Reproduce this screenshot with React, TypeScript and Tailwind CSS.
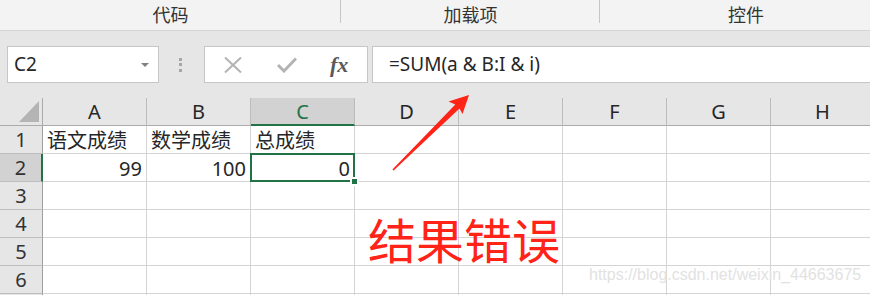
import React from "react";

const COLS = ["A", "B", "C", "D", "E", "F", "G", "H"];
const ROWS = [1, 2, 3, 4, 5, 6, 7];

const DATA: Record<string, { v: string; num?: boolean }> = {
  A1: { v: "语文成绩" },
  B1: { v: "数学成绩" },
  C1: { v: "总成绩" },
  A2: { v: "99", num: true },
  B2: { v: "100", num: true },
  C2: { v: "0", num: true },
};

export default function App() {
  return (
    <div className="relative w-[870px] h-[295px] overflow-hidden bg-white text-[#262626] font-['Noto_Sans','Noto_Sans_CJK_SC',sans-serif]">
      {/* ribbon group labels */}
      <div className="flex h-[31px] bg-[#f3f3f3] border-b border-[#d5d5d5] text-[18px] leading-[31px] text-[#333]">
        <div className="relative w-[341px] shrink-0 text-center">
          代码
          <span className="absolute right-0 top-0 h-[23px] w-px bg-[#c6c6c6]" />
        </div>
        <div className="relative w-[259px] shrink-0 text-center">
          加载项
          <span className="absolute right-0 top-0 h-[23px] w-px bg-[#c6c6c6]" />
        </div>
        <div className="w-[292px] shrink-0 text-center">控件</div>
      </div>

      {/* formula bar */}
      <div className="flex items-center h-[67px] bg-[#e6e6e6] pl-[7px]">
        <div className="flex items-center justify-between w-[152px] h-[37px] bg-white border border-[#c6c6c6] pl-[6px] pr-[9px] text-[19px]">
          <span>C2</span>
          <span className="w-0 h-0 border-l-[4px] border-r-[4px] border-t-[4px] border-l-transparent border-r-transparent border-t-[#808080]" />
        </div>
        <div className="flex flex-col gap-[2.5px] ml-[20px] w-[3px]">
          <span className="h-[3px] w-[3px] bg-[#a6a6a6]" />
          <span className="h-[3px] w-[3px] bg-[#a6a6a6]" />
          <span className="h-[3px] w-[3px] bg-[#a6a6a6]" />
        </div>
        <div className="flex items-center w-[164px] h-[37px] ml-[22px] bg-white border border-[#c6c6c6]">
          <svg width="18" height="16" viewBox="0 0 18 16" className="ml-[19px]">
            <path d="M1 0.5 L17 15.5 M17 0.5 L1 15.5" stroke="#b3b3b3" strokeWidth="2" fill="none" />
          </svg>
          <svg width="20" height="16" viewBox="0 0 20 16" className="ml-[35px]">
            <path d="M1 8 L7 14 L19 1.5" stroke="#b3b3b3" strokeWidth="3" fill="none" />
          </svg>
          <span className="ml-[33px] text-[22px] italic font-bold font-['Liberation_Serif',serif] text-[#5a5a5a] leading-none">fx</span>
        </div>
        <div className="flex items-center flex-1 h-[37px] ml-[4px] bg-white border border-[#c6c6c6] border-r-0 pl-[16px] text-[19px]">
          =SUM(a &amp; B:I &amp; i)
        </div>
      </div>

      {/* sheet grid */}
      <div className="grid grid-cols-[43px_repeat(8,104px)]">
        <div className="relative h-[28px] bg-[#e6e6e6] border-r border-b border-[#ababab]">
          <svg width="20" height="21" viewBox="0 0 20 21" className="absolute left-[19px] top-[3px]">
            <path d="M20 0 L20 21 L0 21 Z" fill="#b4b4b4" />
          </svg>
        </div>
        {COLS.map((c) => {
          const sel = c === "C";
          return (
            <div
              key={c}
              className={
                sel
                  ? "h-[28px] bg-[#d2d2d2] border-r border-[#bcbcbc] border-b-2 border-b-[#217346] text-center text-[20px] leading-[28px] text-[#217346]"
                  : "h-[28px] bg-[#e6e6e6] border-r border-[#bcbcbc] border-b border-b-[#ababab] text-center text-[20px] leading-[28px]"
              }
            >
              {c}
            </div>
          );
        })}

        {ROWS.map((r) => (
          <React.Fragment key={r}>
            <div
              className={
                r === 2
                  ? "h-[28px] bg-[#d2d2d2] border-r-2 border-r-[#217346] border-b border-b-[#bdbdbd] text-center text-[20px] leading-[28px] text-[#333]"
                  : "h-[28px] bg-[#e6e6e6] border-r border-r-[#9f9f9f] border-b border-b-[#bdbdbd] text-center text-[20px] leading-[28px] text-[#333]"
              }
            >
              {r < 7 ? r : null}
            </div>
            {COLS.map((c) => {
              const cell = DATA[c + r];
              const active = c === "C" && r === 2;
              return (
                <div
                  key={c}
                  className={
                    "relative h-[28px] border-r border-b border-[#d4d4d4] px-[4px] text-[20px] leading-[29px] whitespace-nowrap " +
                    (cell?.num ? "text-right" : "text-left") +
                    (active ? " z-10" : "")
                  }
                >
                  {cell?.v}
                  {active && (
                    <>
                      <span className="absolute -left-px -top-px -right-px -bottom-px border-2 border-[#217346]" />
                      <span className="absolute -right-[5px] -bottom-[5px] w-[9px] h-[9px] bg-[#217346] border-2 border-white" />
                    </>
                  )}
                </div>
              );
            })}
          </React.Fragment>
        ))}
      </div>

      {/* annotation arrow */}
      <svg className="absolute inset-0 z-20 pointer-events-none" width="870" height="295" viewBox="0 0 870 295">
        <polygon
          points="469,95 462.5,114 459.5,108.6 393.6,170.6 392.4,169.4 455.3,104.4 448.5,101.5"
          fill="#ff2318"
        />
      </svg>

      {/* annotation text */}
      <div className="absolute z-20 left-[368px] top-[214px] text-[48px] leading-none text-[#ff2318] font-['Noto_Sans_CJK_SC',sans-serif]">
        结果错误
      </div>

      {/* watermark */}
      <div className="absolute z-20 left-[589px] top-[265px] text-[16px] leading-[20px] text-[#e2e2e2] font-['Liberation_Sans',Arial,sans-serif]">
        https://blog.csdn.net/weixin_44663675
      </div>
    </div>
  );
}
